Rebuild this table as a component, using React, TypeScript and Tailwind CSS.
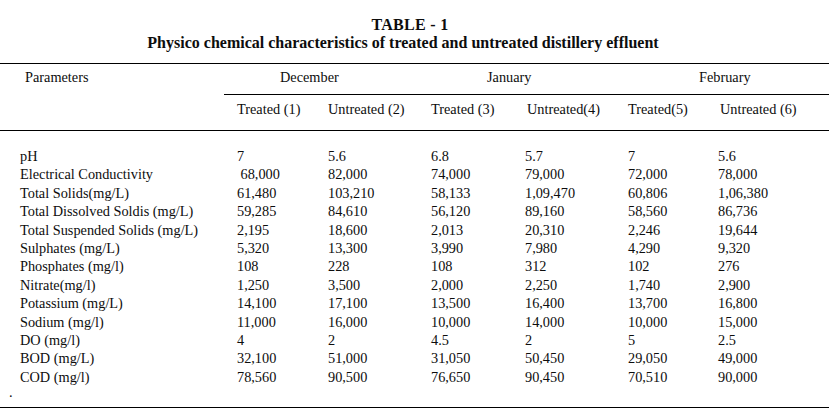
import React from "react";

const rows: [string, string[]][] = [
  ["pH", ["7", "5.6", "6.8", "5.7", "7", "5.6"]],
  ["Electrical Conductivity", ["\u00a068,000", "82,000", "74,000", "79,000", "72,000", "78,000"]],
  ["Total Solids(mg/L)", ["61,480", "103,210", "58,133", "1,09,470", "60,806", "1,06,380"]],
  ["Total Dissolved Soldis (mg/L)", ["59,285", "84,610", "56,120", "89,160", "58,560", "86,736"]],
  ["Total Suspended Solids (mg/L)", ["2,195", "18,600", "2,013", "20,310", "2,246", "19,644"]],
  ["Sulphates (mg/L)", ["5,320", "13,300", "3,990", "7,980", "4,290", "9,320"]],
  ["Phosphates (mg/l)", ["108", "228", "108", "312", "102", "276"]],
  ["Nitrate(mg/l)", ["1,250", "3,500", "2,000", "2,250", "1,740", "2,900"]],
  ["Potassium (mg/L)", ["14,100", "17,100", "13,500", "16,400", "13,700", "16,800"]],
  ["Sodium (mg/l)", ["11,000", "16,000", "10,000", "14,000", "10,000", "15,000"]],
  ["DO (mg/l)", ["4", "2", "4.5", "2", "5", "2.5"]],
  ["BOD (mg/L)", ["32,100", "51,000", "31,050", "50,450", "29,050", "49,000"]],
  ["COD (mg/l)", ["78,560", "90,500", "76,650", "90,450", "70,510", "90,000"]],
];

const grid = "grid grid-cols-[237px_91px_103px_94px_103px_90px_1fr]";

export default function App() {
  return (
    <div className="w-[829px] h-[417px] bg-white text-[#0d0d0d] font-['Liberation_Serif',serif] text-[14.3px] overflow-hidden">
      <div className="pt-[16px] text-center font-bold text-[16px] leading-[18px]">
        <div className="pr-[9px] tracking-[0.3px]">TABLE - 1</div>
        <div className="pr-[23px]">Physico chemical characteristics of treated and untreated distillery effluent</div>
      </div>
      <div className="mt-[11px] border-t border-black">
        <div className={`${grid} h-[30px] pt-[4px] leading-[18px]`}>
          <div className="pl-[25px]">Parameters</div>
          <div className="col-span-2 pl-[43px]">December</div>
          <div className="col-span-2 pl-[56px]">January</div>
          <div className="col-span-2 pl-[71px]">February</div>
        </div>
        <div className="ml-[224px] border-t border-black" />
        <div className={`${grid} h-[36px] pt-[5px] leading-[18px] border-b border-black`}>
          <div />
          <div>Treated (1)</div>
          <div>Untreated (2)</div>
          <div>Treated (3)</div>
          <div className="pl-[2px]">Untreated(4)</div>
          <div>Treated(5)</div>
          <div className="pl-[2px]">Untreated (6)</div>
        </div>
      </div>
      <div className="h-[277px] pt-[16px] border-b border-black leading-[18.4px]">
        {rows.map(([name, vals]) => (
          <div key={name} className={`${grid} h-[18.4px]`}>
            <div className="pl-[20px] whitespace-nowrap">{name}</div>
            {vals.map((v, i) => (
              <div key={i} className="whitespace-pre">{v}</div>
            ))}
          </div>
        ))}
        <div className="pl-[9px] leading-[10px] mt-[1px]">.</div>
      </div>
    </div>
  );
}
